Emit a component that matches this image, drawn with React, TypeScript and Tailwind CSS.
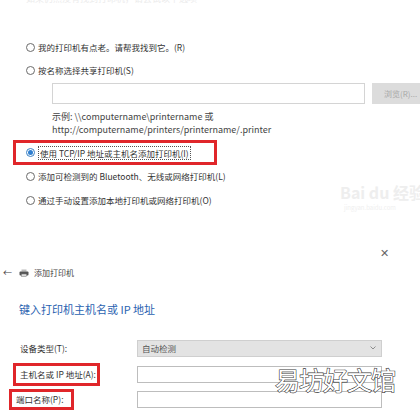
import React from 'react';

const font = { fontFamily: '"Noto Sans CJK SC", "Liberation Sans", sans-serif' };

const Radio: React.FC<{ checked?: boolean }> = ({ checked }) => (
  <span
    className={`flex h-[9px] w-[9px] shrink-0 items-center justify-center rounded-full border ${
      checked ? 'border-[#3b82c4]' : 'border-[#6b6b6b]'
    } bg-white`}
  >
    {checked && <span className="h-[5px] w-[5px] rounded-full bg-[#2f7fd0]" />}
  </span>
);

const RadioRow: React.FC<{ label: string; checked?: boolean; className?: string }> = ({ label, checked, className }) => (
  <div className={`flex h-[14px] items-center gap-[3px] ${className ?? ''}`}>
    <Radio checked={checked} />
    <span className={checked ? 'border border-dotted border-[#555] px-[1px] leading-[12px]' : 'leading-[12px]'}>{label}</span>
  </div>
);

export default function App() {
  return (
    <div className="relative h-[411px] w-[420px] overflow-hidden bg-white text-[8.5px] text-[#333]" style={font}>
      {/* faint cut-off line at top */}
      <div className="-mt-[8px] h-[13px] whitespace-nowrap pl-[26px] text-[9px] leading-[13px] text-[#ececec]">如果仍然没有找到打印机，请尝试以下选项</div>

      <div className="mt-[35px] pl-[26px]">
        <RadioRow label="我的打印机有点老。请帮我找到它。(R)" />
        <RadioRow label="按名称选择共享打印机(S)" className="mt-[9px]" />

        <div className="mt-[6px] flex gap-[7px] pl-[26px]">
          <div className="h-[21px] w-[313px] border border-[#d4d4d4] bg-white" />
          <div className="flex h-[21px] flex-1 items-center bg-[#dcdcdc] pl-[12px] text-[8px] text-[#a8a8a8]">浏览(R)...</div>
        </div>

        <div className="mt-[6px] pl-[26px] text-[9px] leading-[13px] text-[#444]">
          <div className="h-[13px]">示例: \\computername\printername 或</div>
          <div className="h-[13px]">http://computername/printers/printername/.printer</div>
        </div>
      </div>

      <div className="ml-[13px] mt-[4px] flex h-[25px] w-[204px] items-center border-[3px] border-[#e0262a] pl-[10px]">
        <RadioRow label="使用 TCP/IP 地址或主机名添加打印机(I)" checked />
      </div>

      <div className="pl-[26px]">
        <RadioRow label="添加可检测到的 Bluetooth、无线或网络打印机(L)" className="mt-[4px]" />
        <RadioRow label="通过手动设置添加本地打印机或网络打印机(O)" className="mt-[10px]" />
      </div>

      {/* baidu watermark */}
      <div className="absolute left-[340px] top-[183px] whitespace-nowrap text-[16px] font-bold leading-[18px] text-[#eeeeee]">Bai du 经验</div>
      <div className="absolute left-[344px] top-[204px] whitespace-nowrap text-[6px] leading-[8px] text-[#efefef]">jingyan.baidu.com</div>

      <div className="mt-[38px] flex justify-end pr-[31px]">
        <span className="text-[11px] leading-[14px] text-[#666]">✕</span>
      </div>

      <div className="mt-[8px] flex h-[12px] items-center gap-[5px] pl-[3px] text-[8px] text-[#444]">
        <span className="text-[9px]">←</span>
        <svg width="10" height="8" viewBox="0 0 10 8" className="ml-[2px]">
          <rect x="2.5" y="0.5" width="5" height="2" fill="#bbb" />
          <rect x="0.5" y="2.5" width="9" height="4" rx="1" fill="#555" />
          <rect x="2.5" y="5" width="5" height="2.5" fill="#ddd" stroke="#777" strokeWidth="0.5" />
        </svg>
        <span>添加打印机</span>
      </div>

      <div className="mt-[23px] pl-[19px] text-[11px] leading-[14px] text-[#2a62b0]">键入打印机主机名或 IP 地址</div>

      <div className="mt-[23px] flex flex-col text-[8.5px]">
        <div className="flex h-[18px] items-center">
          <span className="w-[137px] pl-[20px]">设备类型(T):</span>
          <div className="flex h-[17px] w-[245px] items-center justify-between border border-[#cfcfcf] bg-[#e3e3e3] pl-[4px] pr-[5px] text-[#555]">
            <span>自动检测</span>
            <svg width="6" height="4" viewBox="0 0 6 4">
              <path d="M0.5 0.5 L3 3 L5.5 0.5" fill="none" stroke="#777" strokeWidth="0.8" />
            </svg>
          </div>
        </div>

        <div className="mt-[6px] flex h-[23px] items-center">
          <div className="w-[137px] pl-[13px]">
            <div className="flex h-[23px] w-[87px] items-center border-[3px] border-[#e0262a] pl-[4px]">主机名或 IP 地址(A):</div>
          </div>
          <div className="h-[17px] w-[245px] border border-[#bdbdbd] bg-white" />
        </div>

        <div className="mt-[3px] flex h-[21px] items-center">
          <div className="w-[137px] pl-[9px]">
            <div className="flex h-[21px] w-[65px] items-center border-[3px] border-[#e0262a] pl-[4px]">端口名称(P):</div>
          </div>
          <div className="h-[17px] w-[245px] border border-[#bdbdbd] bg-white" />
        </div>
      </div>

      {/* site watermark */}
      <div className="absolute left-[275px] top-[364px] whitespace-nowrap text-[25px] leading-[30px] tracking-[-1px] text-white [-webkit-text-stroke:1.2px_#3a3a3a] [paint-order:stroke_fill]">
        易坊好文馆
      </div>
    </div>
  );
}
